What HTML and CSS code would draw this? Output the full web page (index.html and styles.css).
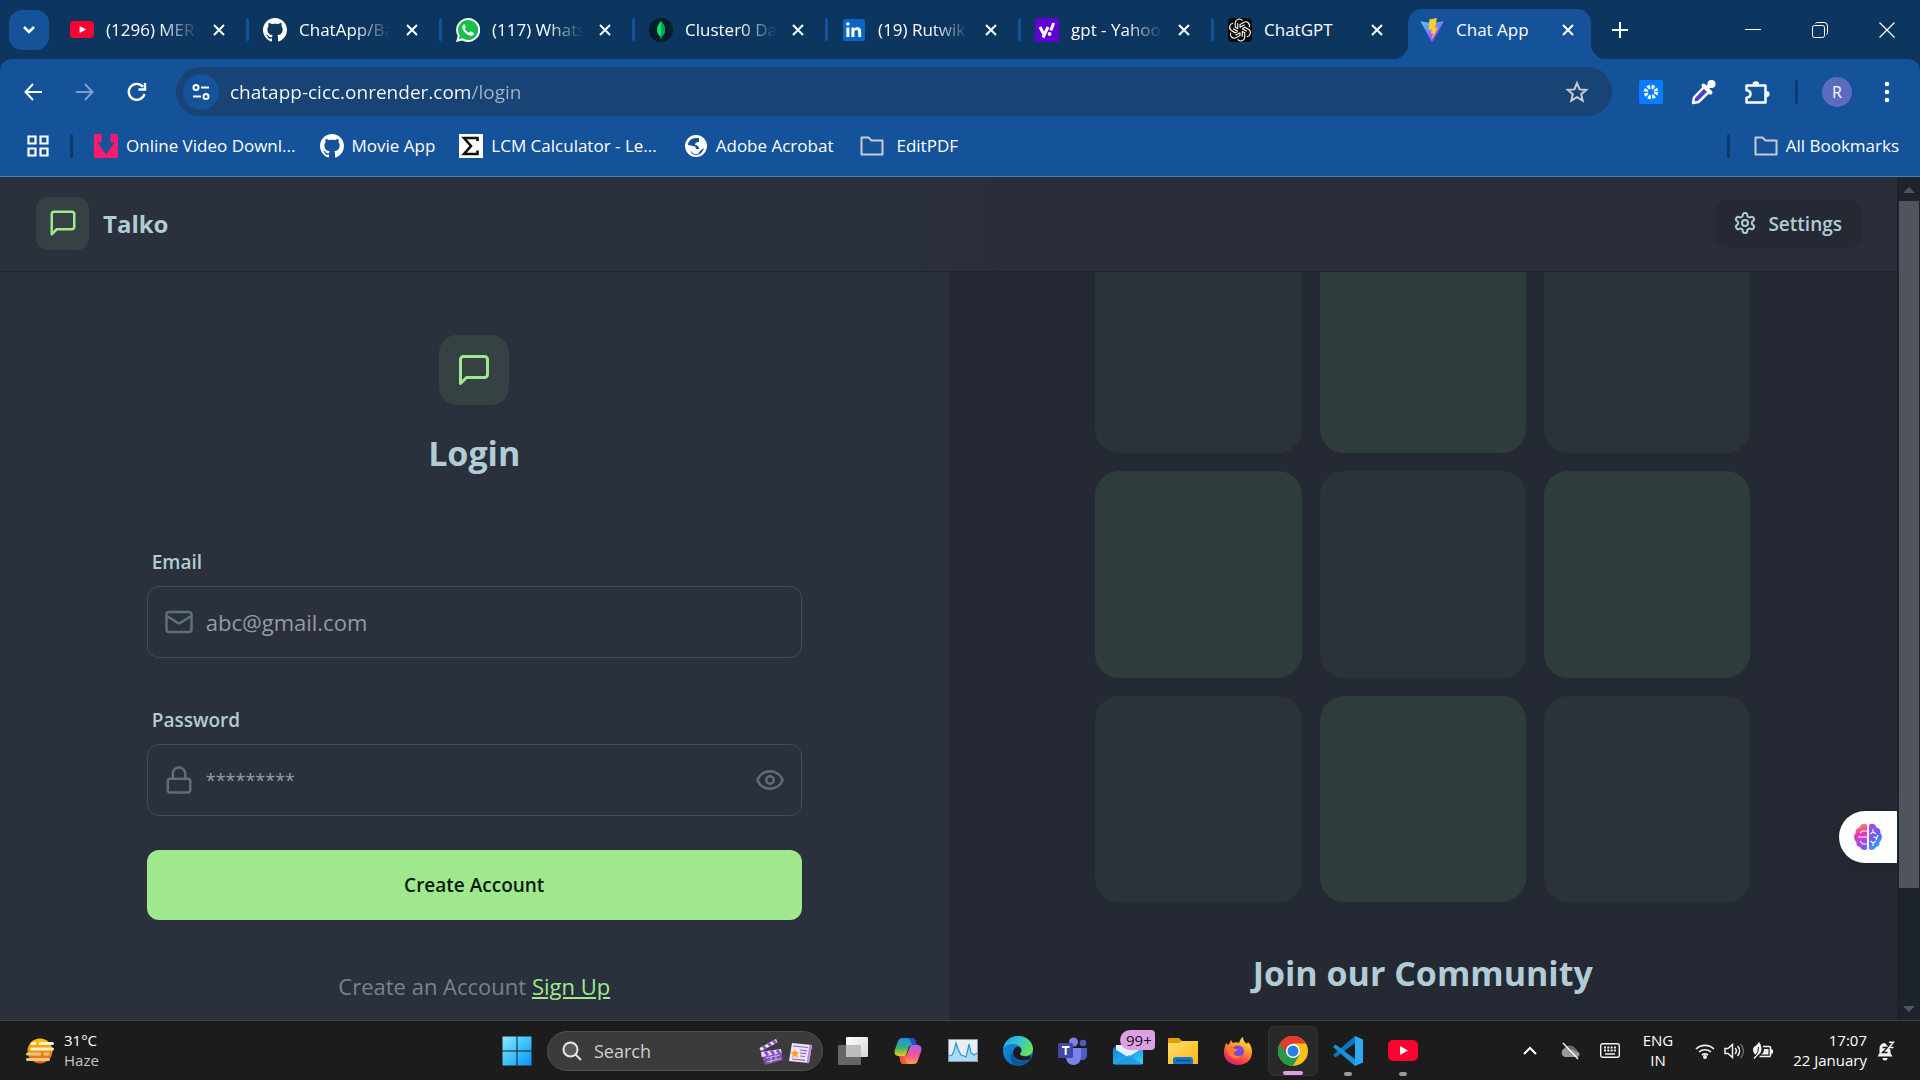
FILE: index.html
```html
<!DOCTYPE html>
<html lang="en">
<head>
<meta charset="utf-8">
<meta name="viewport" content="width=device-width, initial-scale=1">
<title>Chat App</title>
<link rel="stylesheet" href="styles.css">
</head>
<body>
<svg class="sprite" aria-hidden="true">
  <defs>
    <linearGradient id="g-win" x1="0" y1="0" x2="1" y2="1"><stop offset="0" stop-color="#8ce4ff"/><stop offset=".45" stop-color="#45c8fb"/><stop offset="1" stop-color="#0a8ef8"/></linearGradient>
    <linearGradient id="g-vite" x1="0" y1="0" x2=".7" y2="1"><stop offset="0" stop-color="#41d1ff"/><stop offset="1" stop-color="#bd34fe"/></linearGradient>
    <linearGradient id="g-sun" x1="0" y1="0" x2="0" y2="1"><stop offset="0" stop-color="#ffc400"/><stop offset="1" stop-color="#e85d10"/></linearGradient>
    <linearGradient id="g-copA" x1="0" y1="0" x2="0" y2="1"><stop offset="0" stop-color="#1c8cf0"/><stop offset=".55" stop-color="#35b56f"/><stop offset="1" stop-color="#f2c81b"/></linearGradient>
    <linearGradient id="g-copB" x1="0" y1="0" x2="0" y2="1"><stop offset="0" stop-color="#b65cf2"/><stop offset=".55" stop-color="#f0568e"/><stop offset="1" stop-color="#fba04c"/></linearGradient>
    <linearGradient id="g-edgeT" x1="0" y1="0" x2="1" y2=".5"><stop offset="0" stop-color="#1b9fe0"/><stop offset=".5" stop-color="#2fc4d4"/><stop offset="1" stop-color="#66e05c"/></linearGradient>
    <linearGradient id="g-edgeB" x1="0" y1="0" x2="1" y2="1"><stop offset="0" stop-color="#1593e3"/><stop offset="1" stop-color="#0c59a4"/></linearGradient>
    <linearGradient id="g-mail" x1="0" y1="0" x2="1" y2="1"><stop offset="0" stop-color="#1481d8"/><stop offset="1" stop-color="#35d0f8"/></linearGradient>
    <linearGradient id="g-folder" x1="0" y1="0" x2="1" y2="1"><stop offset="0" stop-color="#ffdc6e"/><stop offset="1" stop-color="#fbb90f"/></linearGradient>
    <linearGradient id="g-fox" x1=".8" y1="0" x2=".3" y2="1"><stop offset="0" stop-color="#fff04a"/><stop offset=".4" stop-color="#ff9b26"/><stop offset=".75" stop-color="#ff3f4b"/><stop offset="1" stop-color="#d61a80"/></linearGradient>
    <linearGradient id="g-brainL" x1=".3" y1="0" x2=".5" y2="1"><stop offset="0" stop-color="#fb9a3a"/><stop offset=".4" stop-color="#ee36b8"/><stop offset="1" stop-color="#7a58f5"/></linearGradient>
    <linearGradient id="g-brainR" x1=".2" y1="0" x2=".6" y2="1"><stop offset="0" stop-color="#b04be0"/><stop offset=".5" stop-color="#6a5cf5"/><stop offset="1" stop-color="#2ab0fb"/></linearGradient>
    <linearGradient id="g-task" x1="0" y1="0" x2="1" y2="1"><stop offset="0" stop-color="#fff"/><stop offset="1" stop-color="#d8d8d8"/></linearGradient>
  </defs>
  <symbol id="i-close" viewBox="0 0 12 12"><path d="M1 1l10 10M11 1L1 11" fill="none" stroke="currentColor" stroke-width="2"/></symbol>
  <symbol id="i-youtube" viewBox="0 0 30 21"><rect width="30" height="21" rx="5" fill="#ff0033"/><path d="M12 6l8 4.500-8 4.500z" fill="#fff"/></symbol>
  <symbol id="i-github" viewBox="0 0 16 16"><path fill="#fff" d="M8 0C3.580 0 0 3.580 0 8c0 3.540 2.290 6.530 5.470 7.590.4.070.55-.17.55-.38 0-.19-.01-.82-.01-1.490-2.010.37-2.530-.49-2.690-.94-.09-.23-.48-.94-.82-1.130-.28-.15-.68-.52-.01-.53.63-.01 1.080.58 1.230.82.72 1.210 1.870.87 2.330.66.070-.52.28-.87.51-1.070-1.780-.2-3.640-.89-3.640-3.950 0-.87.31-1.590.82-2.150-.08-.2-.36-1.020.08-2.120 0 0 .67-.21 2.200.82.64-.18 1.320-.27 2-.27s1.360.09 2 .27c1.530-1.040 2.200-.82 2.200-.82.44 1.100.16 1.920.08 2.120.51.56.82 1.270.82 2.150 0 3.070-1.870 3.750-3.650 3.950.29.25.54.73.54 1.480 0 1.070-.01 1.930-.01 2.200 0 .21.15.46.55.38A8.010 8.010 0 0016 8c0-4.420-3.580-8-8-8z"/></symbol>
  <symbol id="i-whatsapp" viewBox="0 0 24 24"><path fill="#fff" d="M12 0a12 12 0 00-10.300 18L0 24l6.200-1.600A12 12 0 1012 0z"/><path fill="#19bf4b" d="M12 2a10 10 0 00-8.300 15.500L2.700 21.300l3.900-1A10 10 0 1012 2z"/><path fill="#fff" d="M8.500 6.300c-.4 0-1 .1-1.400.7-2.200 2.600.3 6.200 3 8.600 3.200 2.600 5.500 2.700 7 1.300.7-.8.900-1.600.7-2l-2.700-1.500c-.5-.2-.7 0-1.200.7-.5.600-.8.600-1.300.4-1.500-.7-2.800-1.900-3.600-3.300-.3-.6.100-.8.500-1.300.3-.4.300-.6.200-.9l-1-2.300z"/></symbol>
  <symbol id="i-mongo" viewBox="0 0 24 24"><circle cx="12" cy="12" r="12" fill="#021e2b"/><path fill="#00ed64" d="M12 3c3 3.500 4 6 4 9 0 3.300-1.800 5.300-3.500 6.600L12.300 21h-.6l-.2-2.400C9.800 17.300 8 15.300 8 12c0-3 1-5.500 4-9z"/><path fill="#00a35c" d="M12 3c3 3.500 4 6 4 9 0 3.300-1.800 5.300-3.500 6.600L12 19z"/></symbol>
  <symbol id="i-linkedin" viewBox="0 0 22 22"><rect width="22" height="22" rx="2" fill="#0a66c2"/><path fill="#fff" d="M3.400 8.500h3V18h-3zM8.400 8.500h2.900v1.300c.5-.9 1.600-1.500 3-1.500 3 0 3.900 1.800 3.900 4.600V18h-3v-4.500c0-1.400-.3-2.600-1.800-2.600s-2 1.100-2 2.500V18h-3z"/><circle cx="4.900" cy="5" r="1.800" fill="#fff"/></symbol>
  <symbol id="i-yahoo" viewBox="0 0 24 24"><path fill="#6001d2" d="M0 0h24v24H0z"/><path d="M5 9l4 7.500M13 9L8 19.500M18.700 5l-3 7.500" fill="none" stroke="#fff" stroke-width="3"/><circle cx="14.600" cy="16" r="1.900" fill="#fff"/></symbol>
  <symbol id="i-gpt" viewBox="0 0 24 24"><rect width="24" height="24" rx="4" fill="#0b0b0b"/><g fill="none" stroke="#fff" stroke-width="1.100"><path id="knot" d="M12 9.400V6.500l4-2.300a4 4 0 015.300 5.200M12 9.400l4.600-2.700"/><use href="#knot" transform="rotate(60 12 12)"/><use href="#knot" transform="rotate(120 12 12)"/><use href="#knot" transform="rotate(180 12 12)"/><use href="#knot" transform="rotate(240 12 12)"/><use href="#knot" transform="rotate(300 12 12)"/></g></symbol>
  <symbol id="i-vite" viewBox="0 0 24 24"><path d="M.4 3.200L11.500 23.500c.3.500.9.500 1.200 0L23.800 3.200 12 5.300z" fill="url(#g-vite)"/><path d="M17 0L9.300 1.500 8.700 12l3.200-.7-.8 4.200 2-.6-1.500 6.600L18 9.500l-3.200.7z" fill="#ffcf29"/></symbol>
  <symbol id="i-sliders" viewBox="0 0 20 20"><g fill="none" stroke="currentColor" stroke-width="2"><circle cx="5" cy="5.500" r="2.500"/><path d="M10 5.500h8M2 14.500h8"/><circle cx="15" cy="14.500" r="2.500"/></g></symbol>
  <symbol id="i-folder" viewBox="0 0 24 20"><path d="M1.500 1.500h7l3 3h11v14h-21z" fill="none" stroke="#c9cbce" stroke-width="2" stroke-linejoin="round"/></symbol>
  <symbol id="i-message" viewBox="0 0 24 24"><path d="M21 15a2 2 0 0 1-2 2H7l-4 4V5a2 2 0 0 1 2-2h14a2 2 0 0 1 2 2z" fill="none" stroke="currentColor" stroke-width="2" stroke-linecap="round" stroke-linejoin="round"/></symbol>
</svg>

<header class="browser">
  <div class="tabstrip">
    <button class="tab-search" aria-label="Search tabs"><svg width="14" height="10" viewBox="0 0 14 10"><path d="M2 2l5 5 5-5" fill="none" stroke="currentColor" stroke-width="2.500"/></svg></button>
    <div class="tabs">
      <div class="tab"><svg class="fav wide"><use href="#i-youtube"/></svg><span class="tab-title">(1296) MER</span><button class="tab-close" aria-label="Close tab"><svg><use href="#i-close"/></svg></button></div>
      <div class="tab"><svg class="fav"><use href="#i-github"/></svg><span class="tab-title">ChatApp/Ba</span><button class="tab-close" aria-label="Close tab"><svg><use href="#i-close"/></svg></button></div>
      <div class="tab"><svg class="fav"><use href="#i-whatsapp"/></svg><span class="tab-title">(117) Whats</span><button class="tab-close" aria-label="Close tab"><svg><use href="#i-close"/></svg></button></div>
      <div class="tab"><svg class="fav"><use href="#i-mongo"/></svg><span class="tab-title">Cluster0 Da</span><button class="tab-close" aria-label="Close tab"><svg><use href="#i-close"/></svg></button></div>
      <div class="tab"><svg class="fav small"><use href="#i-linkedin"/></svg><span class="tab-title">(19) Rutwik</span><button class="tab-close" aria-label="Close tab"><svg><use href="#i-close"/></svg></button></div>
      <div class="tab"><svg class="fav"><use href="#i-yahoo"/></svg><span class="tab-title">gpt - Yahoo</span><button class="tab-close" aria-label="Close tab"><svg><use href="#i-close"/></svg></button></div>
      <div class="tab last"><svg class="fav"><use href="#i-gpt"/></svg><span class="tab-title full">ChatGPT</span><button class="tab-close" aria-label="Close tab"><svg><use href="#i-close"/></svg></button></div>
      <div class="tab active"><svg class="fav"><use href="#i-vite"/></svg><span class="tab-title full">Chat App</span><button class="tab-close" aria-label="Close tab"><svg><use href="#i-close"/></svg></button></div>
    </div>
    <button class="new-tab" aria-label="New tab"><svg width="16" height="16" viewBox="0 0 16 16"><path d="M8 0v16M0 8h16" stroke="currentColor" stroke-width="2"/></svg></button>
    <div class="window-controls">
      <button aria-label="Minimize"><svg width="16" height="16" viewBox="0 0 16 16"><path d="M0 7.500h16" stroke="currentColor"/></svg></button>
      <button aria-label="Restore"><svg width="16" height="16" viewBox="0 0 16 16" fill="none" stroke="currentColor"><rect x=".5" y="3.500" width="12" height="12" rx="2"/><path d="M3.500 1.500Q4 .5 5.500 .5H12a3.500 3.500 0 013.500 3.500v6.500q0 1.500-1 2"/></svg></button>
      <button aria-label="Close window"><svg width="16" height="16" viewBox="0 0 16 16"><path d="M.5.5l15 15M15.500.5l-15 15" stroke="currentColor" stroke-width="1.200"/></svg></button>
    </div>
  </div>

  <div class="toolbar">
    <div class="nav-buttons">
      <button aria-label="Back"><svg width="18" height="18" viewBox="0 0 18 18" fill="none" stroke="currentColor" stroke-width="2"><path d="M18 9H1.500M9 1L1.500 9 9 17"/></svg></button>
      <button class="dim" aria-label="Forward"><svg width="18" height="18" viewBox="0 0 18 18" fill="none" stroke="currentColor" stroke-width="2"><path d="M0 9h16.500M9 1l7.500 8L9 17"/></svg></button>
      <button aria-label="Reload"><svg width="20" height="20" viewBox="0 0 20 20" fill="none" stroke="currentColor" stroke-width="2.400"><path d="M17.500 12A8 8 0 1116 4.800M18 1v6.500h-6.500"/></svg></button>
    </div>
    <div class="omnibox">
      <button class="site-info" aria-label="View site information"><svg width="20" height="20"><use href="#i-sliders"/></svg></button>
      <input class="url" type="text" aria-label="Address" value="chatapp-cicc.onrender.com/login">
      <button class="star" aria-label="Bookmark this tab"><svg width="24" height="24" viewBox="0 0 24 24"><path d="M12 3.200l2.600 6.200 6.600.5-5 4.300 1.500 6.500-5.700-3.500-5.700 3.500 1.500-6.500-5-4.300 6.600-.5z" fill="none" stroke="currentColor" stroke-width="2"/></svg></button>
    </div>
    <div class="extensions">
      <button aria-label="Extension"><svg width="24" height="24" viewBox="0 0 24 24"><rect width="24" height="24" rx="2" fill="#0a7cff"/><circle cx="12" cy="12" r="5.200" fill="none" stroke="#fff" stroke-width="4" stroke-dasharray="2.600 1.480"/></svg></button>
      <button aria-label="Color picker"><svg width="26" height="26" viewBox="0 0 26 26"><path d="M14 7L3 18.500 2 24l5.500-1L19 12" fill="#4a42c8" stroke="#fff" stroke-width="2.500" stroke-linejoin="round"/><path d="M12.500 6.500l7 7M16 9l4.500-4.500" stroke="#fff" stroke-width="4" stroke-linecap="round"/><circle cx="20.500" cy="5" r="4" fill="#fff"/></svg></button>
      <button aria-label="Extensions"><svg width="26" height="26" viewBox="0 0 26 26"><path d="M2.500 6.500h19v17h-19v-4.800q4-.5 4-3.700t-4-3.700z" fill="none" stroke="#fff" stroke-width="2.500" stroke-linejoin="round"/><path d="M8.500 5.500a3.300 3.300 0 016.600 0zM22.500 12a3 3 0 010 6.200z" fill="#fff"/></svg></button>
      <span class="divider"></span>
      <button class="avatar" aria-label="Profile">R</button>
      <button aria-label="Menu"><svg width="6" height="22" viewBox="0 0 6 22" fill="#fff"><circle cx="3" cy="3" r="2.300"/><circle cx="3" cy="11" r="2.300"/><circle cx="3" cy="19" r="2.300"/></svg></button>
    </div>
  </div>

  <nav class="bookmarks" aria-label="Bookmarks">
    <button class="apps" aria-label="Apps"><svg width="22" height="22" viewBox="0 0 22 22" fill="none" stroke="currentColor" stroke-width="2.200"><path d="M1.500 1.500h7v7h-7zM13.500 1.500h7v7h-7zM1.500 13.500h7v7h-7zM13.500 13.500h7v7h-7z"/></svg></button>
    <span class="divider"></span>
    <a href="#"><svg class="bm" viewBox="0 0 24 24"><rect width="24" height="24" rx="1" fill="#fb1b6c"/><path d="M7.500 0h9v8.500h4L12 20.500 3.500 8.500h4z" fill="#14529a"/></svg>Online Video Downl...</a>
    <a href="#"><svg class="bm"><use href="#i-github"/></svg>Movie App</a>
    <a href="#" class="spaced"><svg class="bm" viewBox="0 0 24 24"><path fill="#fff" d="M0 0h24v24H0z"/><path d="M18.500 7V4H5l7 8-7 8h13.500v-3.500" fill="none" stroke="#111" stroke-width="2.600"/></svg>LCM Calculator - Le...</a>
    <a href="#" class="spaced"><svg class="bm" viewBox="0 0 24 24"><circle cx="12" cy="12" r="11" fill="#fff"/><path d="M11 4c-5 1-7 4-7 7l5 1c2 0 3 1 3 3h3c0-2-1-4-4-4 0-2 1-3 4-3V4zM7 17l3 3h4l2-3 4-3c-1 4-4 7-8 7-3 0-5-2-5-4z" fill="#14529a"/></svg>Adobe Acrobat</a>
    <a href="#" class="folder"><svg class="bm"><use href="#i-folder"/></svg>EditPDF</a>
    <span class="divider end"></span>
    <a class="all" href="#"><svg class="bm"><use href="#i-folder"/></svg>All Bookmarks</a>
  </nav>
</header>

<div class="viewport">
  <div class="site">
    <header class="site-nav">
      <a class="brand" href="#"><span class="brand-mark"><svg width="30" height="30"><use href="#i-message"/></svg></span><span>Talko</span></a>
      <button class="settings"><svg width="24" height="24" viewBox="0 0 24 24" fill="none" stroke="currentColor" stroke-width="2" stroke-linecap="round" stroke-linejoin="round"><path d="M12.220 2h-.44a2 2 0 0 0-2 2v.18a2 2 0 0 1-1 1.730l-.43.25a2 2 0 0 1-2 0l-.15-.08a2 2 0 0 0-2.730.73l-.22.38a2 2 0 0 0 .73 2.730l.15.1a2 2 0 0 1 1 1.720v.51a2 2 0 0 1-1 1.740l-.15.09a2 2 0 0 0-.73 2.730l.22.38a2 2 0 0 0 2.730.73l.15-.08a2 2 0 0 1 2 0l.43.25a2 2 0 0 1 1 1.730V20a2 2 0 0 0 2 2h.44a2 2 0 0 0 2-2v-.18a2 2 0 0 1 1-1.730l.43-.25a2 2 0 0 1 2 0l.15.08a2 2 0 0 0 2.730-.73l.22-.39a2 2 0 0 0-.73-2.730l-.15-.08a2 2 0 0 1-1-1.740v-.5a2 2 0 0 1 1-1.740l.15-.09a2 2 0 0 0 .73-2.730l-.22-.38a2 2 0 0 0-2.730-.73l-.15.08a2 2 0 0 1-2 0l-.43-.25a2 2 0 0 1-1-1.730V4a2 2 0 0 0-2-2z"/><circle cx="12" cy="12" r="3"/></svg><span>Settings</span></button>
    </header>
    <main class="split">
      <section class="login">
        <div class="login-head">
          <span class="login-mark"><svg width="36" height="36"><use href="#i-message"/></svg></span>
          <h1>Login</h1>
        </div>
        <form class="form">
          <div class="field">
            <label for="email">Email</label>
            <div class="box">
              <svg width="30" height="30" viewBox="0 0 24 24" fill="none" stroke="currentColor" stroke-width="2" stroke-linecap="round" stroke-linejoin="round"><rect width="20" height="16" x="2" y="4" rx="2"/><path d="m22 7-8.970 5.700a1.940 1.940 0 0 1-2.060 0L2 7"/></svg>
              <input id="email" type="email" placeholder="abc@gmail.com">
            </div>
          </div>
          <div class="field">
            <label for="password">Password</label>
            <div class="box">
              <svg width="30" height="30" viewBox="0 0 24 24" fill="none" stroke="currentColor" stroke-width="2" stroke-linecap="round" stroke-linejoin="round"><rect width="18" height="11" x="3" y="11" rx="2"/><path d="M7 11V7a5 5 0 0 1 10 0v4"/></svg>
              <input id="password" class="secret" type="password" placeholder="*********">
              <button type="button" class="reveal" aria-label="Show password"><svg width="30" height="30" viewBox="0 0 24 24" fill="none" stroke="currentColor" stroke-width="2" stroke-linecap="round" stroke-linejoin="round"><path d="M2.062 12.348a1 1 0 0 1 0-.696 10.750 10.750 0 0 1 19.876 0 1 1 0 0 1 0 .696 10.750 10.750 0 0 1-19.876 0"/><circle cx="12" cy="12" r="3"/></svg></button>
            </div>
          </div>
          <button type="submit" class="submit">Create Account</button>
        </form>
        <p class="signup">Create an Account <a href="#">Sign Up</a></p>
      </section>
      <section class="community">
        <div class="pattern">
          <i></i><i class="lit"></i><i></i>
          <i class="lit"></i><i></i><i class="lit"></i>
          <i></i><i class="lit"></i><i></i>
        </div>
        <h2>Join our Community</h2>
      </section>
    </main>
    <button class="assistant" aria-label="Assistant"><svg width="30" height="30" viewBox="0 0 30 30"><path d="M14 3v24c-2 2-6 1-7-2-3 0-4-3-3.500-5C1 18.500 0 13 2.700 11 2 8 4 6 6.500 5.500 7.500 1 12 1 14 3z" fill="url(#g-brainL)"/><path d="M16 3v24c2 2 6 1 7-2 3 0 4-3 3.500-5 2.500-1.500 3.500-7 .8-9C28 8 26 6 23.500 5.500 22.500 1 18 1 16 3z" fill="url(#g-brainR)"/><path d="M14 9H9.500L7 11M14 15H5M14 22H9.500L7 19M20 7v3l-2.500 2M20 10l3 2M25 13l-1.500 3-3-1M23.500 16v2M20 24v-3l-2.500-2M20 21l3-2" fill="none" stroke="#fff" stroke-width="1.100"/></svg></button>
  </div>
  <div class="scrollbar" aria-hidden="true">
    <span class="arrow up"></span>
    <span class="track"><span class="thumb"></span></span>
    <span class="arrow down"></span>
  </div>
</div>

<footer class="taskbar">
  <button class="weather">
    <svg width="30" height="28" viewBox="0 0 30 28"><circle cx="15" cy="14" r="12.500" fill="url(#g-sun)"/><path d="M7 6.500h3M15 6.500h12.500M6.500 12h21" stroke="#fbf0c8" stroke-width="3" stroke-linecap="round"/><path d="M2.500 17h12M20 17h3M2.500 22.500h21" stroke="#e5c98c" stroke-width="3" stroke-linecap="round"/></svg>
    <span class="weather-text"><span>31°C</span><span class="muted">Haze</span></span>
  </button>
  <div class="dock">
    <button aria-label="Start"><svg width="30" height="30" viewBox="0 0 30 30"><path d="M.5.5h14v14H.5zM15.500.5h14v14h-14zM.5 15.500h14v14H.5zM15.500 15.500h14v14h-14z" fill="url(#g-win)"/></svg></button>
    <label class="search">
      <svg width="20" height="20" viewBox="0 0 20 20" fill="#5a5a5a" stroke="#e6e6e6" stroke-width="2"><circle cx="8.500" cy="8.500" r="7"/><path d="M13.500 13.500l5.500 5.500"/></svg>
      <input type="text" placeholder="Search" aria-label="Search">
      <svg width="54" height="30" viewBox="0 0 54 30"><path d="M3 16l20-3 2 11-18 5z" fill="#7d56a8"/><path d="M3 16l20-3 .6 4-20 4z" fill="#e8d8f8"/><path d="M7 15.500l3 4M13 14.500l3 4M19 14l3 4" stroke="#8c4fd0" stroke-width="3"/><path d="M1.500 12L18 3l1.500 3.500L3 15z" fill="#f2e8fb"/><path d="M5 10l3 3M10 7l3 3M15 4.500l3 3" stroke="#8c4fd0" stroke-width="3"/><path d="M8 22l14-3M9 26l14-3.500M13 21v6M18 20v4" stroke="#cdb2e6"/><path d="M34 7l20 2-3 18-20-2z" fill="#eee3fa"/><path d="M51.500 9l2.500.3-3 18-2.500-.3z" fill="#b98be0"/><path d="M35 10l15 1.500M42 14l7 .8M42 17l6 .6M42 20l5 .5M34 23l13 1.300" stroke="#8867b5" stroke-width="1.200"/><path d="M37 13l1.300 3 3.200.4-2.400 2.100.6 3.200-2.800-1.600-2.900 1.400.7-3.200-2.200-2.300 3.200-.2z" fill="#f9a41c"/></svg>
    </label>
    <button aria-label="Task view"><svg width="30" height="28" viewBox="0 0 30 28"><rect x="8" y="0" width="22" height="20" rx="1" fill="url(#g-task)"/><rect x="0" y="8" width="23" height="20" rx="1" fill="#666"/><path d="M8 8h15v12H8z" fill="#bdbdbd"/></svg></button>
    <button aria-label="Copilot"><svg width="28" height="28" viewBox="0 0 28 28"><path d="M10 19H4.500C1 19 0 16 .8 13L4 4C5 2 6 1 8.500 1H18c2 0 3 1 3.500 3l1 4H18c-2 0-3 1-3.500 3l-2 6c-.5 1.500-1.300 2-2.500 2z" fill="url(#g-copA)"/><path d="M8.500 1H18c2 0 3 1 3.500 3l1 4H18l-1.500-4c-.7-2-2-3-4-3z" fill="#1b52c8"/><path d="M18 8h5.500c3.500 0 4.500 3 3.700 6L24 23c-1 3-2 4-4.500 4H10c-2 0-3-1-3.500-3l-1-5H10c2 0 3-1 3.500-3l2-5c.5-2 1.300-3 2.500-3z" fill="url(#g-copB)"/><path d="M5.500 19H10l1.500 5c.7 2 2 3 4 3H10c-2 0-3-1-3.500-3z" fill="#f05a2c"/></svg></button>
    <button aria-label="Performance monitor"><svg width="30" height="23" viewBox="0 0 30 23"><rect x=".5" y=".5" width="29" height="22" fill="#e9eef3" stroke="#8b95a3"/><path d="M1 17l3-1 2-4 2-8 2 6 3 6 3 1 2 1 2-8 1-5 2 9 3 2 3-2v8H1z" fill="#a9dcf8"/><path d="M1 17l3-1 2-4 2-8 2 6 3 6 3 1 2 1 2-8 1-5 2 9 3 2 3-2" fill="none" stroke="#2c90d4" stroke-width="1.200"/></svg></button>
    <button aria-label="Edge"><svg width="30" height="30" viewBox="0 0 30 30"><circle cx="15" cy="15" r="15" fill="url(#g-edgeB)"/><path d="M0 14C1 5 7 0 15 0c9 0 15 6 15 13 0 5-4 7-8 7-3 0-5-1-5-2s1.500-1.500 1.500-4c0-3-3-6-8-6C5 8 1 10 0 14z" fill="url(#g-edgeT)"/><path d="M10 17c0-3 1.500-5.500 4.500-6.500 2.500.3 4 1.800 4 3.800 0 2-1.500 2.700-1.500 3.700 0 1.500 2 2.500 5 2.500 3 0 4.500-.5 5.500-1.500L27 23c-7 3-17 1-17-6z" fill="#1c1c1c"/><path d="M10 17c0 6 5 10 11 8.500 3-.7 4.500-1.700 6-2.500-3 5-9 8-14 6.500C7 27 6 18 10 17z" fill="#0d55a0"/></svg></button>
    <button aria-label="Teams"><svg width="30" height="28" viewBox="0 0 30 28"><circle cx="15.500" cy="5" r="4.500" fill="#7b83eb"/><circle cx="25" cy="6" r="3.300" fill="#5059c9"/><path d="M20 11h9v7c0 3-2 5-4.500 5S20 21 20 18z" fill="#5059c9"/><path d="M8 11h15v9c0 5-3.500 8-7.500 8S8 25 8 20z" fill="#7b83eb"/><rect y="6" width="15" height="15" rx="1.500" fill="#4048a5"/><path d="M4 10h7.500M7.700 10v8" stroke="#fff" stroke-width="2"/></svg></button>
    <button class="mail" aria-label="Mail"><svg width="30" height="30" viewBox="0 0 30 30"><path d="M0 12l4-3h22l4 3v16H0z" fill="#0b5fb0"/><path d="M3 9h24v7l-12 8L3 16z" fill="#e4f0fa"/><path d="M0 12l15 9 15-9v16H0z" fill="url(#g-mail)"/><path d="M0 29l16-10 14 10z" fill="#1d8fe0" opacity=".7"/></svg><span class="badge">99+</span></button>
    <button aria-label="File Explorer"><svg width="30" height="28" viewBox="0 0 30 28"><path d="M0 2q0-1 1-1h10l3 3h16v8H0z" fill="#e0a000"/><path d="M0 6h11l3-2h16v23H0z" fill="url(#g-folder)"/><path d="M5 27v-4q0-3 3-3h14q3 0 3 3v4z" fill="#0f78d0"/><path d="M8 23.500h14" stroke="#0a4b90" stroke-width="1.500"/></svg></button>
    <button aria-label="Firefox"><svg width="30" height="30" viewBox="0 0 30 30"><path d="M3 7l2 2c1-1 2-2 3-5l2 3c2-1 4-1 6 0 1-3 2-5 4-6 0 4 2 5 4 7l1-2c3 3 4 6 4 10 0 8-6 13-14 13S1 24 1 16c0-3 1-6 2-9z" fill="url(#g-fox)"/><circle cx="15" cy="15.500" r="6" fill="#7547e0"/><path d="M4 11c4 0 6 0 8 2h3c0 2-3 2-4 4 0 3 4 4 8 2-2 4-9 5-12 1-3-3-3-6-3-9z" fill="#ff7b2e"/></svg></button>
    <button class="current" aria-label="Chrome"><svg width="30" height="30" viewBox="0 0 30 30"><circle cx="15" cy="15" r="15" fill="#fbc116"/><path d="M2 7.500A15 15 0 0015 30l6.500-11.300L15 15z" fill="#279847"/><path d="M2 7.500l6.500 11.200 5 3.300L15 15z" fill="#279847"/><path d="M2 7.500A15 15 0 0128 7.500H15L8.500 11l-1 5z" fill="#e33b2e"/><circle cx="15" cy="15" r="7" fill="#fff"/><circle cx="15" cy="15" r="5.500" fill="#2a7de9"/></svg></button>
    <button class="running" aria-label="Visual Studio Code"><svg width="30" height="30" viewBox="0 0 30 30"><path d="M22 7L2.500 21.500 0 19l22-19z" fill="#0a78c0"/><path d="M22 23L2.500 8.500 0 11l22 19z" fill="#1593d9"/><path d="M22 0l8 3.500v23L22 30z" fill="#2fa9f2"/></svg></button>
    <button class="running" aria-label="YouTube"><svg width="30" height="21"><use href="#i-youtube"/></svg></button>
  </div>
  <div class="tray">
    <button class="chevron" aria-label="Show hidden icons"><svg width="14" height="9" viewBox="0 0 14 9"><path d="M1 8l6-6 6 6" fill="none" stroke="#fff" stroke-width="2"/></svg></button>
    <button class="cloud" aria-label="OneDrive"><svg width="20" height="18" viewBox="0 0 20 18"><path d="M4 7a6 5 0 0111-1l3 3H2z" fill="#6a6a6a"/><path d="M5 15a4.500 4.500 0 01-.5-8.500c2-.5 4 .5 5 2 2-1.500 4-1 5 .5 3 0 5 1.500 5 3.500S18 15 16 15z" fill="#9a9a9a"/><path d="M3 1l15 16" stroke="#fff" stroke-width="1.300"/></svg></button>
    <button class="keyboard" aria-label="Touch keyboard"><svg width="20" height="15" viewBox="0 0 20 15" fill="none" stroke="#f2f2f2"><rect x=".7" y=".7" width="18.600" height="13.600" rx="2" stroke-width="1.400"/><path d="M4 4.500h12M4 7.500h12" stroke-width="2" stroke-dasharray="2 1.300"/><path d="M5 11h10" stroke-width="1.500"/></svg></button>
    <button class="language"><span>ENG</span><span>IN</span></button>
    <button class="status" aria-label="Network, sound and battery">
      <svg width="20" height="16" viewBox="0 0 20 16" fill="none" stroke="#f2f2f2" stroke-width="1.600"><path d="M1 6a13 13 0 0118 0M4 9a9 9 0 0112 0M7 12a5 5 0 016 0"/><circle cx="10" cy="14" r="1.200" fill="#f2f2f2"/></svg>
      <svg width="20" height="16" viewBox="0 0 20 16" fill="none" stroke="#f2f2f2" stroke-width="1.500"><path d="M1 5.500h3l4.500-4v13l-4.500-4H1zM11 5a4 4 0 010 6M13.500 3a7 7 0 010 10"/><path d="M16.500 1a10 10 0 010 14" stroke="#666"/></svg>
      <svg width="20" height="18" viewBox="0 0 20 18"><path d="M10 4.500h6.500q1 0 1 1v8q0 1-1 1h-10" fill="none" stroke="#f2f2f2" stroke-width="1.600"/><path d="M18 7.500h2v4h-2zM11 7h4.500v5.500H8q3-1.500 3-5.500z" fill="#f2f2f2"/><path d="M0 7.500C0 4 4 4 6 0c3 3 4 11-1 13L1.500 17l-1-1L3 13C1 12 0 10 0 7.500z" fill="#f2f2f2"/><path d="M5.500 5Q6 10 2 14" fill="none" stroke="#1c1c1c"/></svg>
    </button>
    <button class="clock"><span>17:07</span><span>22 January</span></button>
    <button class="bell" aria-label="Notifications"><svg width="18" height="20" viewBox="0 0 18 20"><path d="M8 2C4 2 2.500 5 2.500 8v4L.5 15.500h15L13.500 12V9zM5.500 17h5a2.500 2.500 0 01-5 0z" fill="#f2f2f2"/><path d="M5.500 6.500h5L5.500 11.500h5" fill="none" stroke="#1c1c1c" stroke-width="1.400"/><path d="M12 1.200h4.500L12 6.500h4.500" fill="none" stroke="#f2f2f2" stroke-width="1.400"/></svg></button>
  </div>
</footer>
</body>
</html>
```
FILE: styles.css
```css
:root {
  --strip: #0c355f;
  --chrome: #14529a;
  --base: #2a303c;
  --base-dark: #242933;
  --content: #b2ccd6;
  --primary: #9fe88d;
}

* { box-sizing: border-box; }

body {
  margin: 0;
  height: 100vh;
  display: flex;
  flex-direction: column;
  overflow: hidden;
  font-family: "Open Sans", "Noto Sans", sans-serif;
  font-size: 17px;
  background: var(--base);
  color: #fff;
}

button, input { font: inherit; color: inherit; }
button { padding: 0; border: 0; background: none; display: flex; align-items: center; justify-content: center; }
input { border: 0; outline: 0; background: none; padding: 0; min-width: 0; }
a { color: inherit; text-decoration: none; }
svg { flex: none; display: block; }
h1, h2, p { margin: 0; }
.sprite { position: absolute; width: 0; height: 0; }

/* Browser chrome */
.browser { background: var(--strip); border-bottom: 1px solid #4a7fb8; }
.tabstrip { display: flex; align-items: center; height: 59px; padding-left: 9px; }
.tab-search { width: 40px; height: 40px; border-radius: 13px; background: var(--chrome); margin-right: 5px; }
.tabs { display: flex; align-self: stretch; }
.tab { position: relative; display: flex; align-items: center; width: 193px; padding: 0 16px; }
.tab::after { content: ""; position: absolute; right: -2px; top: 18px; width: 3px; height: 23px; border-radius: 2px; background: var(--chrome); }
.tab.last::after { display: none; }
.fav { width: 24px; height: 24px; margin-right: 12px; }
.fav.wide { height: 17px; }
.fav.small { height: 22px; }
.tab-title { flex: 1; white-space: nowrap; line-height: 26px; -webkit-mask-image: linear-gradient(90deg, #000 54px, transparent 92px); mask-image: linear-gradient(90deg, #000 54px, transparent 92px); }
.tab-title.full { -webkit-mask-image: none; mask-image: none; }
.tab-close { width: 24px; height: 24px; }
.tab-close svg { width: 12px; height: 12px; }
.tab.active { width: 183px; margin: 9px 0 0 3px; padding: 0 11px 8px 12px; border-radius: 14px 14px 0 0; background: var(--chrome); }
.tab.active::before, .tab.active::after { content: ""; display: block; position: absolute; top: auto; bottom: 0; width: 16px; height: 16px; border-radius: 0; background: radial-gradient(circle at 0 0, transparent 16px, var(--chrome) 17px); }
.tab.active::before { left: -16px; }
.tab.active::after { right: -16px; background: radial-gradient(circle at 100% 0, transparent 16px, var(--chrome) 17px); }
.new-tab { width: 40px; height: 40px; margin-left: 9px; }
.window-controls { display: flex; margin-left: auto; }
.window-controls button { width: 67px; height: 59px; }

.toolbar { display: flex; align-items: center; height: 65px; background: var(--chrome); border-radius: 12px 12px 0 0; padding: 0 12px 0 7px; }
.nav-buttons { display: flex; }
.nav-buttons button { width: 52px; height: 40px; }
.nav-buttons .dim { color: #7ba0cb; }
.omnibox { display: flex; flex: 1; align-items: center; height: 49px; margin-left: 13px; border-radius: 25px; background: #184475; padding: 0 23px 0 7px; }
.site-info { width: 36px; height: 36px; border-radius: 50%; background: var(--chrome); }
.url { flex: 1; height: 32px; margin-left: 11px; font-size: 19px; color: transparent; background: linear-gradient(90deg, #fff 241px, #a3b4c8 241px); -webkit-background-clip: text; background-clip: text; }
.star { color: #c9cbce; }
.extensions { display: flex; align-items: center; padding-left: 12px; }
.extensions button { width: 53px; height: 40px; }
.divider { width: 3px; height: 24px; border-radius: 2px; background: #0c3a6e; }
.extensions .divider { margin: 0 24px 0 12px; }
.extensions .avatar { width: 30px; height: 30px; border-radius: 50%; background: #5c6bc0; font-size: 16px; }
.extensions .avatar + button { width: 70px; margin-right: -14px; }

.bookmarks { display: flex; align-items: center; height: 52px; padding: 0 21px 8px 27px; background: var(--chrome); font-size: 17px; line-height: 24px; }
.bookmarks a { display: flex; align-items: center; gap: 8px; margin-right: 24px; white-space: nowrap; }
.bookmarks .spaced { margin-right: 27px; }
.bookmarks .folder { gap: 12px; }
.bm { width: 24px; height: 24px; }
.bookmarks .divider { margin: 0 21px; }
.bookmarks .divider.end { margin: 0 24px 0 auto; }
.bookmarks .all { margin: 0; }

/* Web page */
.viewport { display: flex; flex: 1; min-height: 0; }
.site { position: relative; display: flex; flex: 1; flex-direction: column; min-width: 0; overflow: hidden; color: var(--content); }
.site-nav { display: flex; align-items: center; justify-content: space-between; height: 95px; flex: none; padding: 0 36px 2px; background: linear-gradient(90deg, #2a303c 48%, #2b2e3a 53%); border-bottom: 1px solid #20252e; }
.brand { display: flex; align-items: center; gap: 14px; font-size: 24px; font-weight: 700; line-height: 36px; }
.brand span:last-child, .settings span { padding-top: 2px; }
.brand-mark { display: grid; place-items: center; width: 53px; height: 53px; border-radius: 12px; background: #364144; color: var(--primary); }
.settings { gap: 11px; height: 47px; padding: 0 19px 0 17px; border-radius: 12px; background: var(--base-dark); box-shadow: 0 1px 3px rgb(0 0 0 / 8%); font-size: 19px; font-weight: 600; }

.split { display: grid; grid-template-columns: 1fr 1fr; flex: 1; min-height: 0; }
.login { display: flex; flex-direction: column; align-items: center; padding-top: 63px; background: var(--base); }
.login-head { display: flex; flex-direction: column; align-items: center; gap: 24px; margin-bottom: 71px; }
.login-mark { display: grid; place-items: center; width: 70px; height: 70px; border-radius: 18px; background: #364144; color: var(--primary); }
h1, h2 { font-size: 34px; font-weight: 700; line-height: 48px; }
.form { display: flex; flex-direction: column; gap: 34px; width: 100%; max-width: 655px; }
.field { display: flex; flex-direction: column; gap: 10px; }
.field + .field { margin-top: 14px; }
.field label { padding-left: 5px; font-size: 19px; font-weight: 600; line-height: 28px; }
.box { display: flex; align-items: center; gap: 12px; height: 72px; padding: 0 16px; border: 1px solid #454c59; border-radius: 12px; color: #5f6f7a; }
.box input { flex: 1; height: 40px; font-size: 22px; color: var(--content); }
.box .secret { font-size: 18px; }
.box input::placeholder { color: #949ba6; opacity: 1; }
.submit { height: 70px; border-radius: 12px; background: var(--primary); color: #0d1a0b; font-size: 19px; font-weight: 600; }
.signup { margin-top: 50px; font-size: 22px; line-height: 32px; color: #748490; }
.signup a { color: var(--primary); text-decoration: underline; }

.community { display: flex; flex-direction: column; align-items: center; overflow: hidden; background: var(--base-dark); }
.pattern { display: grid; grid-template-columns: repeat(3, 1fr); gap: 18px; width: 100%; max-width: 655px; margin: -25px 0 47px; }
.pattern i { aspect-ratio: 1; border-radius: 24px; background: #2a3339; }
.pattern .lit { background: #303c3c; }

.assistant { position: absolute; right: 0; bottom: 157px; width: 58px; height: 52px; border-radius: 26px 0 0 26px; background: #fff; box-shadow: 0 4px 24px rgb(0 0 0 / 12%); }

.scrollbar { display: flex; flex-direction: column; width: 23px; padding: 0 1px 0 2px; background: #1d232a; }
.arrow { align-self: center; border: 6px solid transparent; }
.arrow.up { margin-top: 4px; margin-bottom: 8px; border-bottom-color: #50555d; }
.arrow.down { margin-top: 6px; margin-bottom: 2px; border-top-color: #50555d; }
.track { flex: 1; }
.thumb { display: block; height: 86%; background: #50555d; }

/* Taskbar */
.taskbar { display: grid; grid-template-columns: 1fr auto 1fr; align-items: center; height: 60px; flex: none; background: #1c1c1c; border-top: 1px solid #424242; font-size: 15px; line-height: 20px; }
.weather { gap: 9px; margin-left: 25px; justify-self: start; }
.weather-text { display: flex; flex-direction: column; text-align: left; }
.weather-text, .language, .clock { padding-bottom: 2px; }
.muted { color: #c4c4c4; }
.dock { display: flex; align-items: center; gap: 5px; }
.dock button { position: relative; width: 50px; height: 50px; border-radius: 6px; }
.dock .current { background: #292929; border: 1px solid #323232; }
.current::after, .running::after { content: ""; position: absolute; bottom: 0; width: 8px; height: 4px; border-radius: 2px; background: #9a9a9a; }
.dock .current::after { width: 20px; background: #d9a0e0; }
.search { display: flex; align-items: center; gap: 12px; width: 276px; height: 40px; padding: 0 10px 0 14px; border: 1px solid #505050; border-radius: 20px; background: #3b3b3b; }
.search input { flex: 1; width: 0; font-size: 18px; }
.search input::placeholder { color: #cfcfcf; opacity: 1; }
.badge { position: absolute; left: 17px; top: 4px; height: 20px; padding: 0 3px 0 6px; border-radius: 10px 4px 4px 10px; background: #dda0e4; color: #111; font-size: 15px; line-height: 20px; }
.tray { display: flex; align-items: center; justify-self: end; padding-right: 25px; }
.cloud { margin-left: 23px; }
.keyboard { margin-left: 20px; }
.language { flex-direction: column; margin-left: 23px; }
.status { gap: 9px; margin-left: 22px; }
.clock { flex-direction: column; align-items: flex-end; margin-left: 20px; }
.bell { margin-left: 10px; }
```
